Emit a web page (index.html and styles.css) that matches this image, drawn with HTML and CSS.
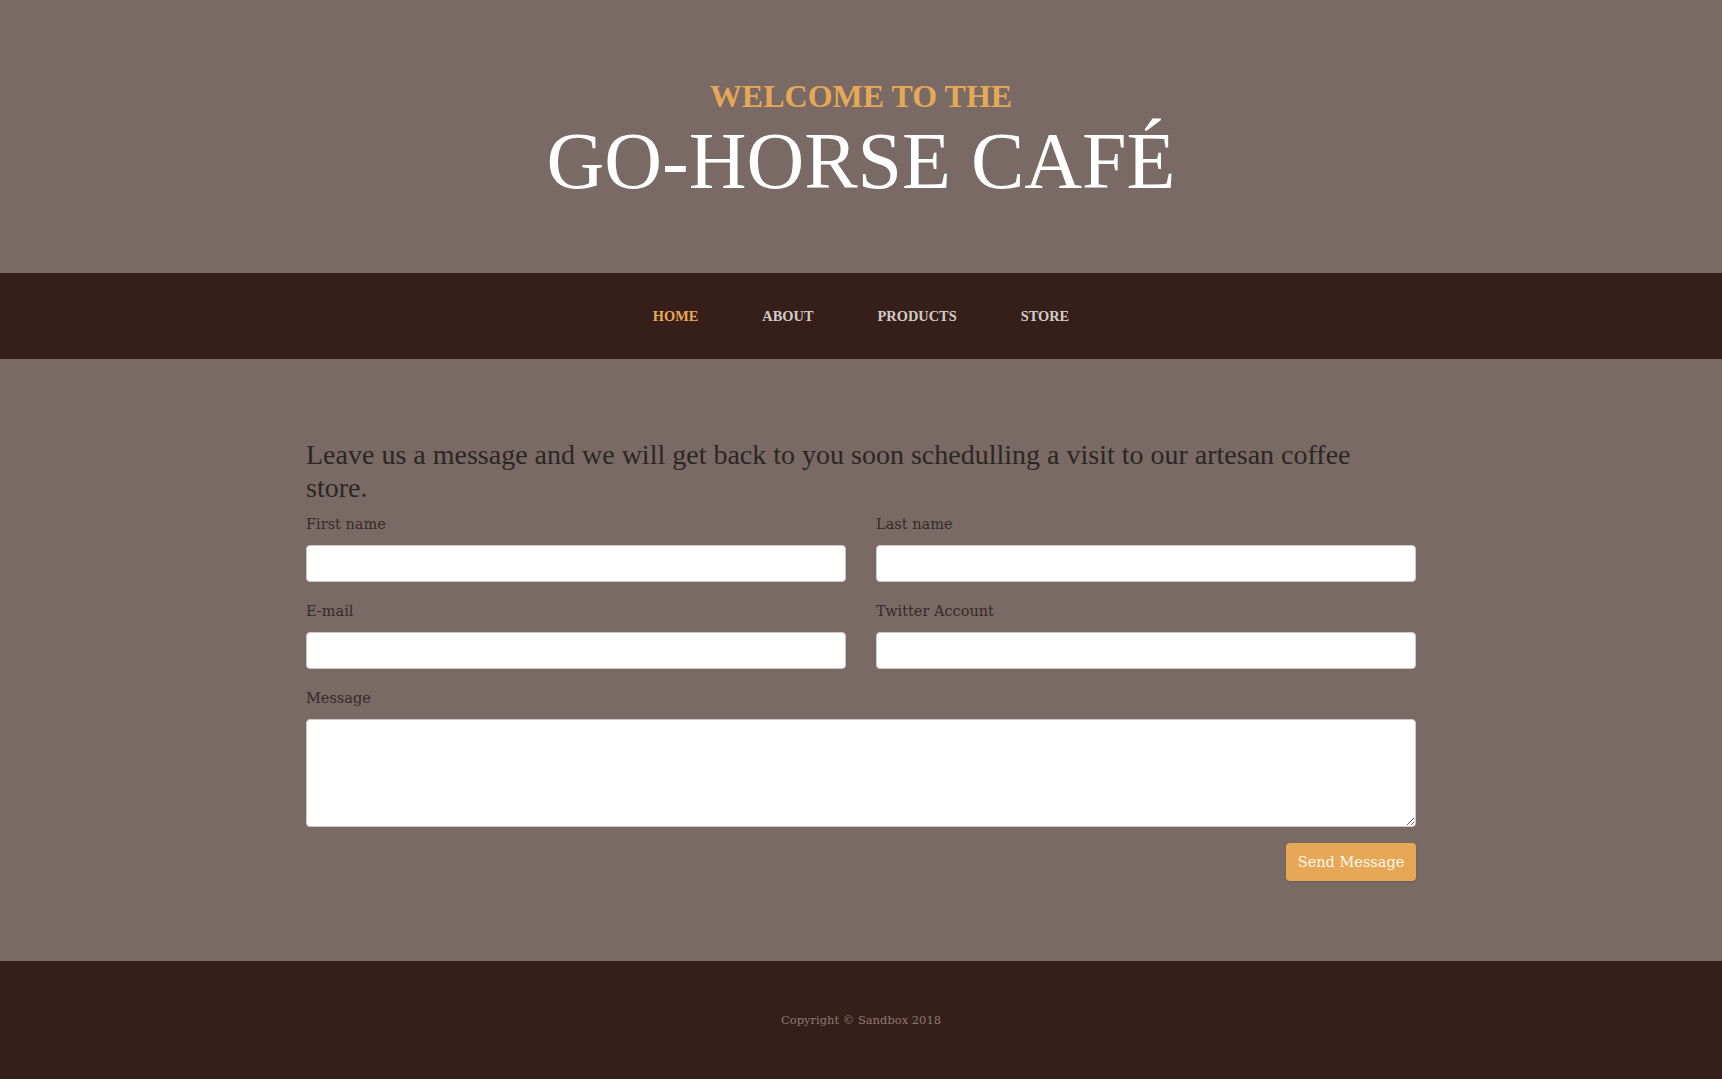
FILE: index.html
```html
<!DOCTYPE html>
<html lang="en">
<head>
<meta charset="utf-8">
<title>Go-Horse Café</title>
<link rel="stylesheet" href="styles.css">
</head>
<body>
<header class="site-header">
  <h1 class="site-heading">
    <span class="heading-upper">Welcome to the</span>
    <span class="heading-lower">Go-Horse Café</span>
  </h1>
</header>
<nav class="main-nav">
  <a class="nav-link active" href="#">Home</a>
  <a class="nav-link" href="#">About</a>
  <a class="nav-link" href="#">Products</a>
  <a class="nav-link" href="#">Store</a>
</nav>
<main class="page-section">
  <div class="container">
    <p class="intro">Leave us a message and we will get back to you soon schedulling a visit to our artesan coffee store.</p>
    <form class="contact-form">
      <div class="form-row">
        <div class="form-group">
          <label for="first">First name</label>
          <input id="first" class="form-control" type="text">
        </div>
        <div class="form-group">
          <label for="last">Last name</label>
          <input id="last" class="form-control" type="text">
        </div>
      </div>
      <div class="form-row">
        <div class="form-group">
          <label for="email">E-mail</label>
          <input id="email" class="form-control" type="text">
        </div>
        <div class="form-group">
          <label for="twitter">Twitter Account</label>
          <input id="twitter" class="form-control" type="text">
        </div>
      </div>
      <div class="form-group">
        <label for="msg">Message</label>
        <textarea id="msg" class="form-control textarea"></textarea>
      </div>
      <div class="form-actions">
        <button type="button" class="btn-send">Send Message</button>
      </div>
    </form>
  </div>
</main>
<footer class="site-footer">
  <p class="copyright">Copyright © Sandbox 2018</p>
</footer>
</body>
</html>
```

FILE: styles.css
```css
* { box-sizing: border-box; }

html, body {
  margin: 0;
  padding: 0;
}

body {
  background: #796a65;
  font-family: "DejaVu Serif", "Liberation Serif", serif;
  color: #3a302d;
}

.site-header {
  height: 273px;
  padding-top: 80px;
  background: #796a65;
}

.site-heading {
  margin: 0;
  text-align: center;
  text-transform: uppercase;
  font-family: "Liberation Serif", "Times New Roman", serif;
  line-height: 1;
}

.heading-upper {
  display: block;
  font-size: 32px;
  font-weight: 700;
  color: #e6a756;
}

.heading-lower {
  display: block;
  margin-top: 9px;
  font-size: 80px;
  font-weight: 400;
  color: #ffffff;
}

.main-nav {
  height: 86px;
  background: #361f1a;
  display: flex;
  justify-content: center;
  align-items: center;
}

.nav-link {
  padding: 0 32px;
  font-family: "Liberation Serif", "Times New Roman", serif;
  font-size: 14.4px;
  font-weight: 700;
  text-transform: uppercase;
  text-decoration: none;
  color: #d4cbc7;
}

.nav-link.active {
  color: #e6a756;
}

.page-section {
  padding: 79px 0 80px;
}

.container {
  width: 1110px;
  margin: 0 auto;
}

.intro {
  margin: 0 0 8px;
  padding-right: 20px;
  font-family: "Liberation Serif", "Times New Roman", serif;
  font-size: 28px;
  line-height: 33px;
  color: #2c2624;
}

.form-row {
  display: flex;
  gap: 30px;
}

.form-row .form-group {
  flex: 1;
}

.form-group {
  margin-bottom: 16px;
}

label {
  display: block;
  margin-bottom: 9px;
  font-size: 14.5px;
  line-height: 24px;
  color: #352b28;
}

.form-control {
  display: block;
  width: 100%;
  height: 37px;
  padding: 6px 12px;
  border: 1px solid #cfc8c5;
  border-radius: 4px;
  background: #ffffff;
  font-family: inherit;
  font-size: 15px;
}

.textarea {
  height: 108px;
  resize: vertical;
}

.form-group:last-of-type {
  margin-bottom: 17px;
}

.form-actions {
  display: flex;
  justify-content: flex-end;
}

.btn-send {
  width: 130px;
  height: 38px;
  border: none;
  border-radius: 4px;
  background: #e6a756;
  color: #fff7ea;
  font-family: "DejaVu Serif", serif;
  font-size: 14.5px;
  box-shadow: 0 1px 2px rgba(0,0,0,0.15);
}

.site-footer {
  height: 118px;
  background: #361f1a;
  display: flex;
  align-items: center;
  justify-content: center;
}

.copyright {
  margin: 0;
  font-size: 11.5px;
  color: #8c7a72;
}
```
